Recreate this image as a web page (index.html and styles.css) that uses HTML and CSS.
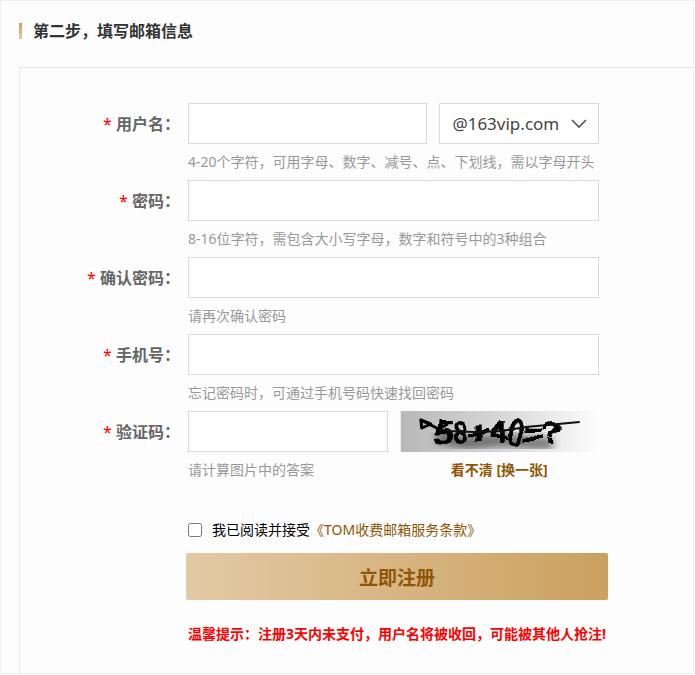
FILE: index.html
```html
<!DOCTYPE html>
<html lang="zh-CN">
	<head>
		<meta charset="utf-8">
		<meta name="viewport" content="width=device-width, initial-scale=1">
		<title>填写邮箱信息</title>
		<link rel="stylesheet" href="styles.css">
	</head>
	<body>
		<main class="page">
			<h1 class="title">第二步，填写邮箱信息</h1>
			<form class="panel" action="/register" method="post">
				<div class="row">
					<label class="label" for="username"><span class="star">*</span> 用户名：</label>
					<div class="field">
						<div class="controls user">
							<input class="text" type="text" id="username" name="username">
							<select class="domain" name="domain" aria-label="邮箱域名">
								<option>@163vip.com</option>
							</select>
						</div>
						<p class="hint">4-20个字符，可用字母、数字、减号、点、下划线，需以字母开头</p>
					</div>
				</div>
				<div class="row">
					<label class="label" for="password"><span class="star">*</span> 密码：</label>
					<div class="field">
						<input class="text" type="password" id="password" name="password">
						<p class="hint">8-16位字符，需包含大小写字母，数字和符号中的3种组合</p>
					</div>
				</div>
				<div class="row">
					<label class="label" for="confirm"><span class="star">*</span> 确认密码：</label>
					<div class="field">
						<input class="text" type="password" id="confirm" name="confirm">
						<p class="hint">请再次确认密码</p>
					</div>
				</div>
				<div class="row">
					<label class="label" for="mobile"><span class="star">*</span> 手机号：</label>
					<div class="field">
						<input class="text" type="tel" id="mobile" name="mobile">
						<p class="hint">忘记密码时，可通过手机号码快速找回密码</p>
					</div>
				</div>
				<div class="row">
					<label class="label" for="captcha"><span class="star">*</span> 验证码：</label>
					<div class="field captcha">
						<div>
							<input class="text" type="text" id="captcha" name="captcha">
							<p class="hint">请计算图片中的答案</p>
						</div>
						<div>
							<svg class="code" viewBox="0 0 198 41" role="img" aria-label="验证码图片">
								<defs>
									<linearGradient id="fade">
										<stop offset="0" stop-color="#b8b8b8"/>
										<stop offset=".5" stop-color="#d6d6d6"/>
										<stop offset="1" stop-color="#fdfdfd"/>
									</linearGradient>
									<filter id="smudge" x="-20%" y="-60%" width="140%" height="220%">
										<feGaussianBlur stdDeviation="4"/>
									</filter>
									<filter id="warp" x="-10%" y="-10%" width="120%" height="120%">
										<feTurbulence type="fractalNoise" baseFrequency=".05" numOctaves="1" seed="4" result="noise"/>
										<feDisplacementMap in="SourceGraphic" in2="noise" scale="14" xChannelSelector="R" yChannelSelector="G"/>
										<feGaussianBlur stdDeviation=".4"/>
									</filter>
								</defs>
								<rect width="198" height="41" fill="url(#fade)"/>
								<path d="M36 26L66 32L104 29L132 32L152 33" fill="none" stroke="#000" stroke-width="12" opacity=".5" filter="url(#smudge)"/>
								<text class="sum" x="34" y="33" filter="url(#warp)">58+40=?</text>
								<path d="M36 18L50 20L72 21L101 20L125 16L179 11" fill="none" stroke="#111" stroke-width="2"/>
								<path d="M20 8L21 17L30 13L20 9L38 18L47 13" fill="none" stroke="#000" stroke-width="3" stroke-linejoin="round"/>
							</svg>
							<a class="change" href="#">看不清 [换一张]</a>
						</div>
					</div>
				</div>
				<div class="agree">
					<input class="check" type="checkbox" id="agree" name="agree">
					<label for="agree">我已阅读并接受</label><a href="#">《TOM收费邮箱服务条款》</a>
				</div>
				<div class="submit">
					<button class="register" type="submit">立即注册</button>
					<p class="tip">温馨提示：注册3天内未支付，用户名将被收回，可能被其他人抢注!</p>
				</div>
			</form>
		</main>
	</body>
</html>
```

FILE: styles.css
```css
* {
	box-sizing: border-box;
}

body {
	margin: 0;
	padding: 0 1px 1px 0;
	background: #fff;
	font-family: "Noto Sans", "Noto Sans CJK SC", sans-serif;
	font-size: 14px;
	color: #222;
}

p {
	margin: 0;
}

a {
	color: #8f5606;
	text-decoration: none;
}

.page {
	min-height: calc(100vh - 1px);
	display: flex;
	flex-direction: column;
	padding: 18px 0 0 18px;
	background: #fdfdfd;
	border: 1px solid #f0f0f0;
}

.title {
	display: flex;
	align-items: center;
	gap: 11px;
	margin: 0 0 24px;
	font-size: 16px;
	line-height: 24px;
	color: #333;
}

.title::before {
	content: "";
	width: 3px;
	height: 16px;
	background: linear-gradient(#cca05e, #e2caa5);
}

.panel {
	flex: 1;
	padding: 35px 0 24px;
	border: 1px solid #e6e6e6;
	border-width: 1px 0 0 1px;
}

.row {
	display: flex;
	gap: 8px;
}

.label {
	width: 160px;
	line-height: 42px;
	font-size: 16px;
	font-weight: bold;
	text-align: right;
	color: #666;
}

.star {
	font-weight: normal;
	color: #f00;
}

.field {
	width: 411px;
}

.controls,
.captcha {
	display: grid;
	gap: 12px;
}

.user {
	grid-template-columns: 3fr 2fr;
}

.captcha {
	grid-template-columns: 1fr 1fr;
}

.text,
.domain {
	display: block;
	width: 100%;
	height: 41px;
	padding: 0 12px;
	border: 1px solid #d9d9d9;
	border-radius: 0;
	background: #fff;
	font-family: inherit;
	font-size: 17px;
	color: #444;
}

.domain {
	appearance: none;
	background: #fff url("data:image/svg+xml,%3Csvg xmlns='http://www.w3.org/2000/svg' width='16' height='10'%3E%3Cpath d='M1 1l7 7 7-7' fill='none' stroke='%23555' stroke-width='1.6'/%3E%3C/svg%3E") no-repeat right 11px center;
}

.hint {
	line-height: 36px;
	color: #999;
	white-space: nowrap;
}

.code {
	display: block;
	width: 100%;
	height: 41px;
}

.sum {
	font-family: "Liberation Sans", sans-serif;
	font-size: 32px;
	stroke: #000;
	stroke-width: 2px;
}

.change {
	display: block;
	line-height: 36px;
	font-weight: bold;
	text-align: center;
}

.agree {
	display: flex;
	align-items: center;
	margin: 30px 0 11px 168px;
	line-height: 24px;
	color: #000;
}

.check {
	width: 14px;
	height: 14px;
	margin: 0 10px 0 0;
}

.submit {
	width: 422px;
	margin-left: 166px;
}

.register {
	display: block;
	width: 100%;
	height: 47px;
	border: 0;
	border-radius: 2px;
	background: linear-gradient(to right, #e2caa5, #cca05e);
	font-family: inherit;
	font-size: 19px;
	font-weight: bold;
	color: #8f5606;
}

.tip {
	display: flex;
	justify-content: center;
	padding-top: 22px;
	line-height: 24px;
	font-weight: bold;
	color: #f00;
	white-space: nowrap;
}
```
